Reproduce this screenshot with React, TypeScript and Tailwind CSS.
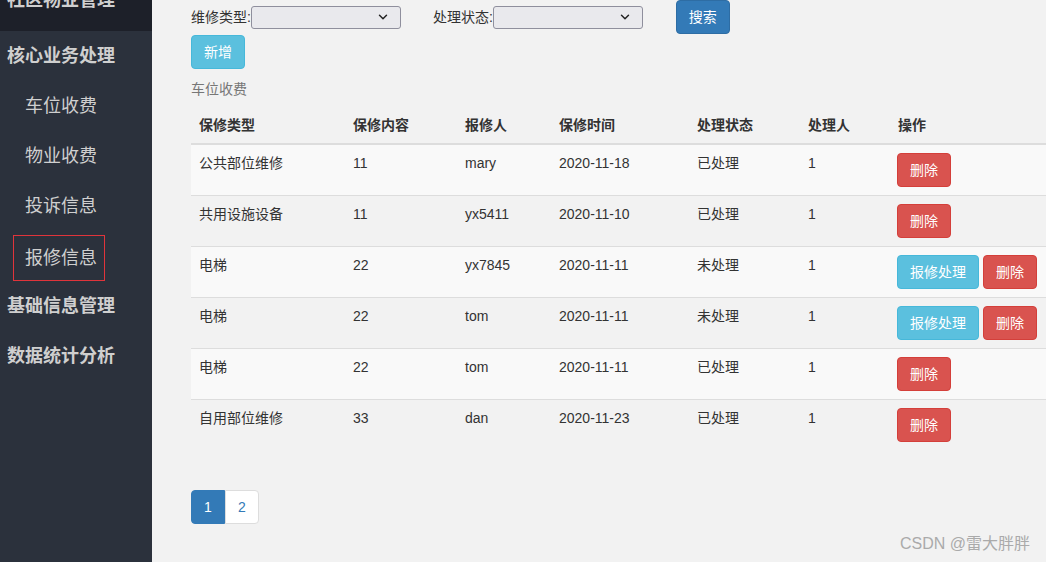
import { ChevronDown } from 'lucide-react'

const font = { fontFamily: '"Liberation Sans", "Noto Sans CJK SC", sans-serif' }

interface Repair {
  type: string
  content: string
  person: string
  date: string
  status: string
  handler: string
}

const rows: Repair[] = [
  { type: '公共部位维修', content: '11', person: 'mary', date: '2020-11-18', status: '已处理', handler: '1' },
  { type: '共用设施设备', content: '11', person: 'yx5411', date: '2020-11-10', status: '已处理', handler: '1' },
  { type: '电梯', content: '22', person: 'yx7845', date: '2020-11-11', status: '未处理', handler: '1' },
  { type: '电梯', content: '22', person: 'tom', date: '2020-11-11', status: '未处理', handler: '1' },
  { type: '电梯', content: '22', person: 'tom', date: '2020-11-11', status: '已处理', handler: '1' },
  { type: '自用部位维修', content: '33', person: 'dan', date: '2020-11-23', status: '已处理', handler: '1' },
]

const cols = 'grid grid-cols-[154px_112px_94px_138px_111px_90px_1fr]'

const groups = [
  { title: '核心业务处理', items: ['车位收费', '物业收费', '投诉信息', '报修信息'] },
  { title: '基础信息管理', items: [] },
  { title: '数据统计分析', items: [] },
]

function Select() {
  return (
    <div className="flex h-[23px] w-[150px] items-center justify-end rounded-[3px] border border-[#8f8f9d] bg-[#e9e9ed] pr-[10px]">
      <ChevronDown className="h-[14px] w-[14px] text-[#222]" strokeWidth={2.5} />
    </div>
  )
}

export default function App() {
  return (
    <div className="flex h-[562px] w-[1046px] overflow-hidden bg-[#f2f2f2] text-[14px] text-[#333]" style={font}>
      {/* Sidebar */}
      <aside className="flex w-[152px] shrink-0 flex-col bg-[#2b313c] text-[18px] text-[#cfcfcf]">
        <div className="h-[31px] overflow-hidden bg-[#1d2029] pl-[7px]">
          <div className="-mt-[12px] font-bold leading-[24px]">社区物业管理</div>
        </div>
        {groups.map((g) => (
          <div key={g.title}>
            <div className="flex h-[50px] items-center pl-[7px] pt-[1px] font-bold">{g.title}</div>
            {g.items.map((item) =>
              item === '报修信息' ? (
                <div key={item} className="flex h-[50px] items-center">
                  <div className="mt-[4px] ml-[13px] flex h-[46px] w-[92px] items-center border border-[#e0343b] pl-[11px]">
                    {item}
                  </div>
                </div>
              ) : (
                <div key={item} className="flex h-[50px] items-center pl-[25px]">
                  {item}
                </div>
              )
            )}
          </div>
        ))}
      </aside>

      {/* Main */}
      <main className="relative flex-1 pl-[39px]">
        <div className="flex h-[35px] items-start">
          <div className="flex h-[34px] items-center">
            <span>维修类型:</span>
            <Select />
          </div>
          <div className="ml-[32px] flex h-[34px] items-center">
            <span>处理状态:</span>
            <Select />
          </div>
          <button className="ml-[33px] h-[34px] w-[54px] rounded-[4px] border border-[#2e6da4] bg-[#337ab7] text-white">
            搜索
          </button>
        </div>
        <button className="h-[34px] w-[54px] rounded-[4px] border border-[#46b8da] bg-[#5bc0de] text-white">
          新增
        </button>
        <div className="pt-[10px] pb-[8px] leading-[20px] text-[#777]">车位收费</div>

        {/* Table */}
        <div className="leading-[20px]">
          <div className={`${cols} border-b-2 border-[#ddd] font-bold`}>
            {['保修类型', '保修内容', '报修人', '保修时间', '处理状态', '处理人', '操作'].map((h) => (
              <div key={h} className="p-[8px]">
                {h}
              </div>
            ))}
          </div>
          {rows.map((r, i) => (
            <div
              key={i}
              className={`${cols} border-[#ddd] ${i > 0 ? 'border-t' : ''} ${i % 2 === 0 ? 'bg-[#f9f9f9]' : 'bg-[#f2f2f2]'}`}
            >
              <div className="p-[8px]">{r.type}</div>
              <div className="p-[8px]">{r.content}</div>
              <div className="p-[8px]">{r.person}</div>
              <div className="p-[8px]">{r.date}</div>
              <div className="p-[8px]">{r.status}</div>
              <div className="p-[8px]">{r.handler}</div>
              <div className="flex gap-[4px] p-[8px] pl-[7px]">
                {r.status === '未处理' && (
                  <button className="h-[34px] w-[82px] rounded-[4px] border border-[#46b8da] bg-[#5bc0de] text-white">
                    报修处理
                  </button>
                )}
                <button className="h-[34px] w-[54px] rounded-[4px] border border-[#d43f3a] bg-[#d9534f] text-white">
                  删除
                </button>
              </div>
            </div>
          ))}
        </div>

        {/* Pagination */}
        <div className="mt-[40px] flex">
          <span className="flex h-[34px] w-[34px] items-center justify-center rounded-l-[4px] border border-[#337ab7] bg-[#337ab7] text-white">
            1
          </span>
          <span className="flex h-[34px] w-[34px] items-center justify-center rounded-r-[4px] border border-[#ddd] bg-white text-[#337ab7]">
            2
          </span>
        </div>

        <div className="absolute right-[16px] bottom-[6px] text-[16px] text-[#aaa]">CSDN @雷大胖胖</div>
      </main>
    </div>
  )
}
